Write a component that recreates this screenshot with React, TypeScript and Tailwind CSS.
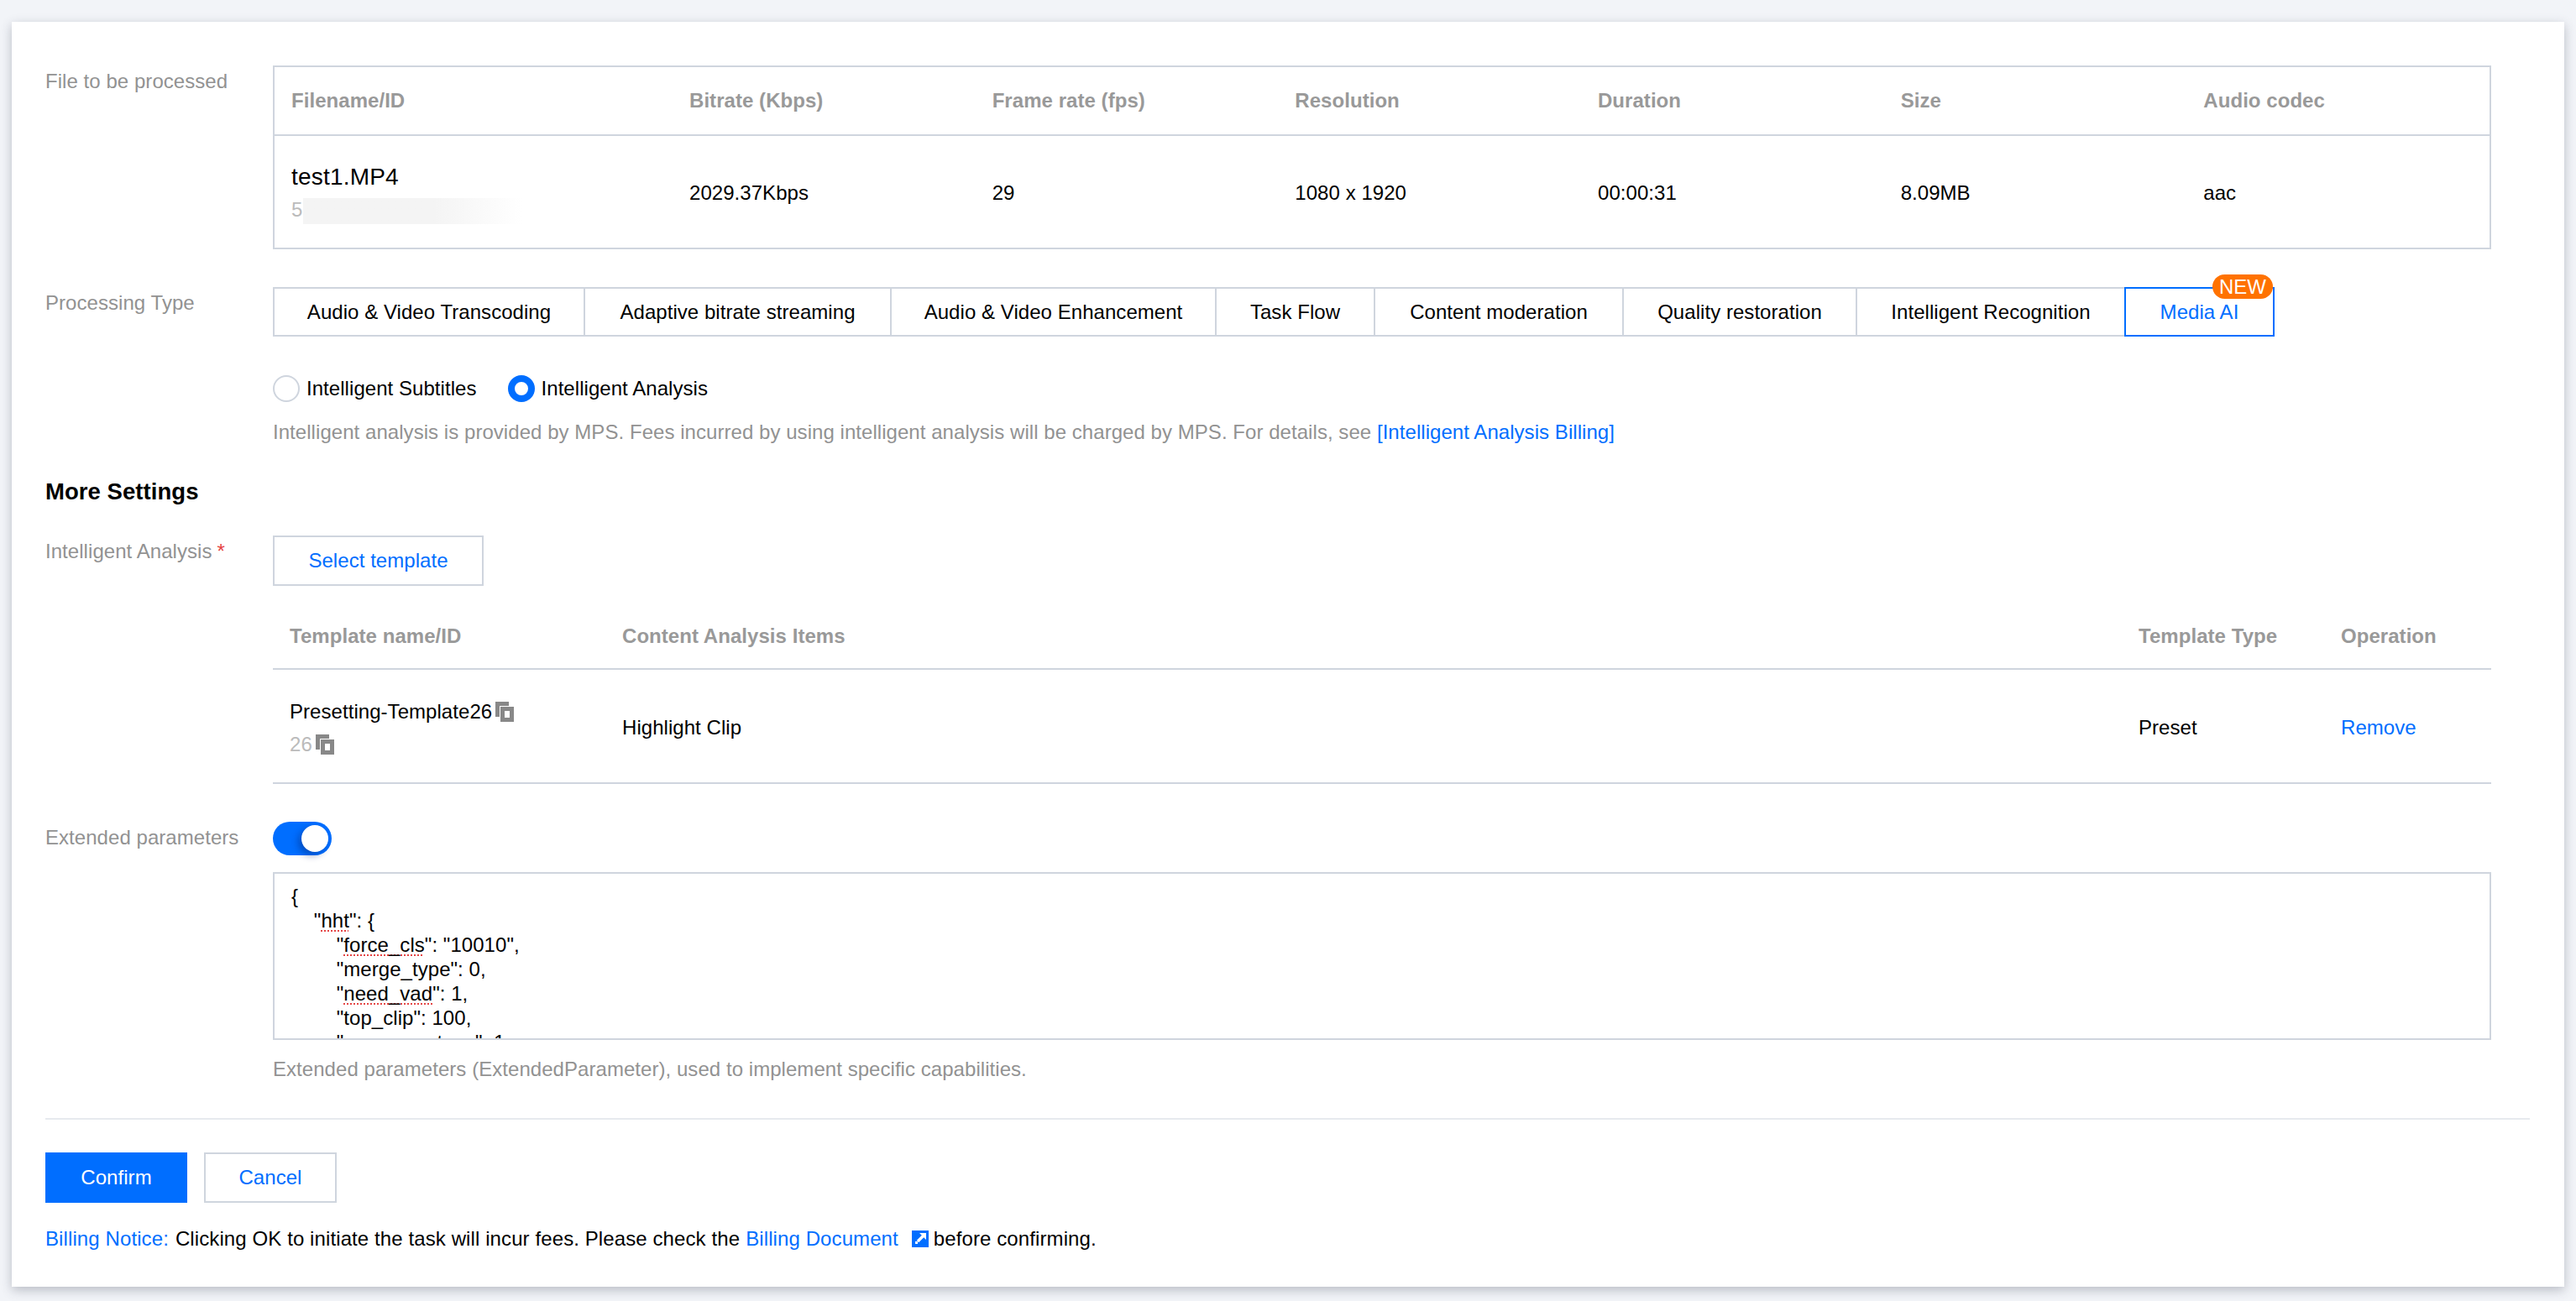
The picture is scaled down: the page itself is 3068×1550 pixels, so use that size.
const fileCols = ['Filename/ID', 'Bitrate (Kbps)', 'Frame rate (fps)', 'Resolution', 'Duration', 'Size', 'Audio codec']
const fileVals = ['2029.37Kbps', '29', '1080 x 1920', '00:00:31', '8.09MB', 'aac']
const tabs = [
  { name: 'Audio & Video Transcoding', width: 'w-[372px] border-l-2' },
  { name: 'Adaptive bitrate streaming', width: 'w-[365px]' },
  { name: 'Audio & Video Enhancement', width: 'w-[387px]' },
  { name: 'Task Flow', width: 'w-[189px]' },
  { name: 'Content moderation', width: 'w-[296px]' },
  { name: 'Quality restoration', width: 'w-[278px]' },
  { name: 'Intelligent Recognition', width: 'w-[320px]' },
]

function CopyIcon() {
  return (
    <svg width="22" height="24" viewBox="0 0 22 24" className="shrink-0" fill="#888888">
      <path d="M0 0h16v5H5v13H0z" />
      <path fillRule="evenodd" d="M6 6h16v18H6zM11 11v8h6v-8z" />
    </svg>
  )
}

function LinkIcon() {
  return (
    <svg width="20" height="20" viewBox="0 0 20 20" className="block">
      <rect width="20" height="20" fill="#006eff" />
      <path d="M9 3H17V11L14.2 8.2L8.2 14.2L5.8 11.8L11.8 5.8Z" fill="#ffffff" />
      <rect x="4" y="13" width="3" height="3" fill="#ffffff" />
    </svg>
  )
}

function Row({ label, required, children }: { label: string; required?: boolean; children: React.ReactNode }) {
  return (
    <div className="flex">
      <div className="w-[271px] shrink-0 pt-px text-[#929292]">
        {label}
        {required && <span className="ml-[6px] text-[#e54545]">*</span>}
      </div>
      <div className="min-w-0 flex-1">{children}</div>
    </div>
  )
}

function Radio({ label, checked }: { label: string; checked?: boolean }) {
  return (
    <div className="flex items-center gap-[8px]">
      {checked ? (
        <span className="h-[32px] w-[32px] rounded-full border-8 border-[#006eff] bg-white" />
      ) : (
        <span className="h-[32px] w-[32px] rounded-full border-2 border-[#cfd5de] bg-white" />
      )}
      <span className="pt-px text-black">{label}</span>
    </div>
  )
}

function Squiggle({ children }: { children: React.ReactNode }) {
  return (
    <span className="underline decoration-[#e54545] decoration-dotted decoration-2 underline-offset-[3px]">
      {children}
    </span>
  )
}

export default function App() {
  return (
    <div
      className="h-[1550px] w-[3068px] overflow-hidden bg-[#f2f4f8] pl-[14px] pt-[26px] text-[24px] leading-[36px] tracking-[0.05px]"
      style={{ fontFamily: '"Liberation Sans", Arial, sans-serif' }}
    >
      <div className="h-[1507px] w-[3040px] bg-white pl-[40px] pr-[41px] pt-[52px] shadow-[0_4px_12px_rgba(54,58,80,0.3)]">
        <div className="mr-[46px]">
          <Row label="File to be processed">
            <div className="border-2 border-[#cfd5de]">
              <div className="grid h-[82px] grid-cols-[474px_repeat(6,1fr)] items-center border-b-2 border-[#cfd5de] font-bold text-[#999999]">
                {fileCols.map((c) => (
                  <div key={c} className="px-[20px]">{c}</div>
                ))}
              </div>
              <div className="grid h-[133px] grid-cols-[474px_repeat(6,1fr)] items-center pt-[2px] text-black">
                <div className="px-[20px]">
                  <div className="mb-px text-[28px] leading-[40px] tracking-[0.2px]">test1.MP4</div>
                  <div className="relative leading-[36px] text-[#bbbbbb]">
                    5
                    <div className="absolute left-[14px] top-[4px] h-[31px] w-[260px] bg-gradient-to-r from-[#f4f4f4] from-60% to-white" />
                  </div>
                </div>
                {fileVals.map((v) => (
                  <div key={v} className="px-[20px]">{v}</div>
                ))}
              </div>
            </div>
          </Row>

          <div className="mt-[45px]">
            <Row label="Processing Type">
              <div className="flex">
                {tabs.map((t) => (
                  <div
                    key={t.name}
                    className={`flex h-[59px] items-center justify-center border-y-2 border-r-2 border-[#cfd5de] text-black ${t.width}`}
                  >
                    {t.name}
                  </div>
                ))}
                <div className="relative -ml-[2px] flex h-[59px] w-[179px] items-center justify-center border-2 border-[#006eff] text-[#006eff]">
                  Media AI
                  <span className="absolute right-0 -top-[17px] flex h-[29px] w-[72px] items-center justify-center rounded-full bg-[#ff7200] text-[24px] leading-none text-white">
                    NEW
                  </span>
                </div>
              </div>
              <div className="mt-[43px] flex gap-[37px]">
                <Radio label="Intelligent Subtitles" />
                <Radio label="Intelligent Analysis" checked />
              </div>
              <div className="mt-[16px] text-[#929292]">
                Intelligent analysis is provided by MPS. Fees incurred by using intelligent analysis will be charged by MPS. For details, see{' '}
                <span className="text-[#006eff]">[Intelligent Analysis Billing]</span>
              </div>
            </Row>
          </div>

          <div className="mt-[33px] text-[27.5px] font-bold leading-[40px] text-black">More Settings</div>

          <div className="mt-[32px]">
            <Row label="Intelligent Analysis" required>
              <div className="flex h-[60px] w-[251px] items-center justify-center border-2 border-[#cfd5de] text-[#006eff]">
                Select template
              </div>
              <div className="mt-[21px] grid h-[79px] grid-cols-[396px_1fr_241px_199px] items-center border-b-2 border-[#cfd5de] font-bold text-[#999999]">
                <div className="px-[20px]">Template name/ID</div>
                <div className="px-[20px]">Content Analysis Items</div>
                <div className="px-[20px]">Template Type</div>
                <div className="px-[20px]">Operation</div>
              </div>
              <div className="grid h-[136px] grid-cols-[396px_1fr_241px_199px] items-center border-b-2 border-[#cfd5de] pt-[4px] text-black">
                <div className="px-[20px]">
                  <div className="flex items-center gap-[4px] leading-[40px]">
                    Presetting-Template26
                    <CopyIcon />
                  </div>
                  <div className="flex items-center gap-[4px] leading-[38px] text-[#bbbbbb]">
                    26
                    <CopyIcon />
                  </div>
                </div>
                <div className="px-[20px]">Highlight Clip</div>
                <div className="px-[20px]">Preset</div>
                <div className="px-[20px] text-[#006eff]">Remove</div>
              </div>
            </Row>
          </div>

          <div className="mt-[45px]">
            <Row label="Extended parameters">
              <div className="flex h-[40px] w-[70px] items-center justify-end rounded-full bg-[#006eff] pr-[4px]">
                <span className="h-[32px] w-[32px] rounded-full bg-white shadow-[-4px_4px_8px_rgba(0,40,120,0.45)]" />
              </div>
              <div className="mt-[20px] h-[200px] overflow-hidden whitespace-pre border-2 border-[#cfd5de] px-[20px] pt-[12px] leading-[29px] text-black">
                <div>{'{'}</div>
                <div>
                  {'    "'}<Squiggle>hht</Squiggle>{'": {'}
                </div>
                <div>
                  {'        "'}<Squiggle>force_cls</Squiggle>{'": "10010",'}
                </div>
                <div>{'        "merge_type": 0,'}</div>
                <div>
                  {'        "'}<Squiggle>need_vad</Squiggle>{'": 1,'}
                </div>
                <div>{'        "top_clip": 100,'}</div>
                <div>{'        "res_save_type": 1'}</div>
              </div>
              <div className="mt-[17px] text-[#929292]">
                Extended parameters (ExtendedParameter), used to implement specific capabilities.
              </div>
            </Row>
          </div>
        </div>

        <div className="mt-[40px] h-[2px] bg-[#e7eaef]" />

        <div className="mt-[39px] flex gap-[20px]">
          <div className="flex h-[60px] w-[169px] items-center justify-center bg-[#006eff] text-white">Confirm</div>
          <div className="flex h-[60px] w-[158px] items-center justify-center border-2 border-[#cfd5de] text-[#006eff]">Cancel</div>
        </div>

        <div className="mt-[25px] flex items-center tracking-[0.1px] text-black">
          <span className="text-[#006eff]">Billing Notice:</span>
          <span className="ml-[8px]">Clicking OK to initiate the task will incur fees. Please check the</span>
          <span className="ml-[7px] text-[#006eff]">Billing Document</span>
          <span className="ml-[16px]"><LinkIcon /></span>
          <span className="ml-[6px]">before confirming.</span>
        </div>
      </div>
    </div>
  )
}
